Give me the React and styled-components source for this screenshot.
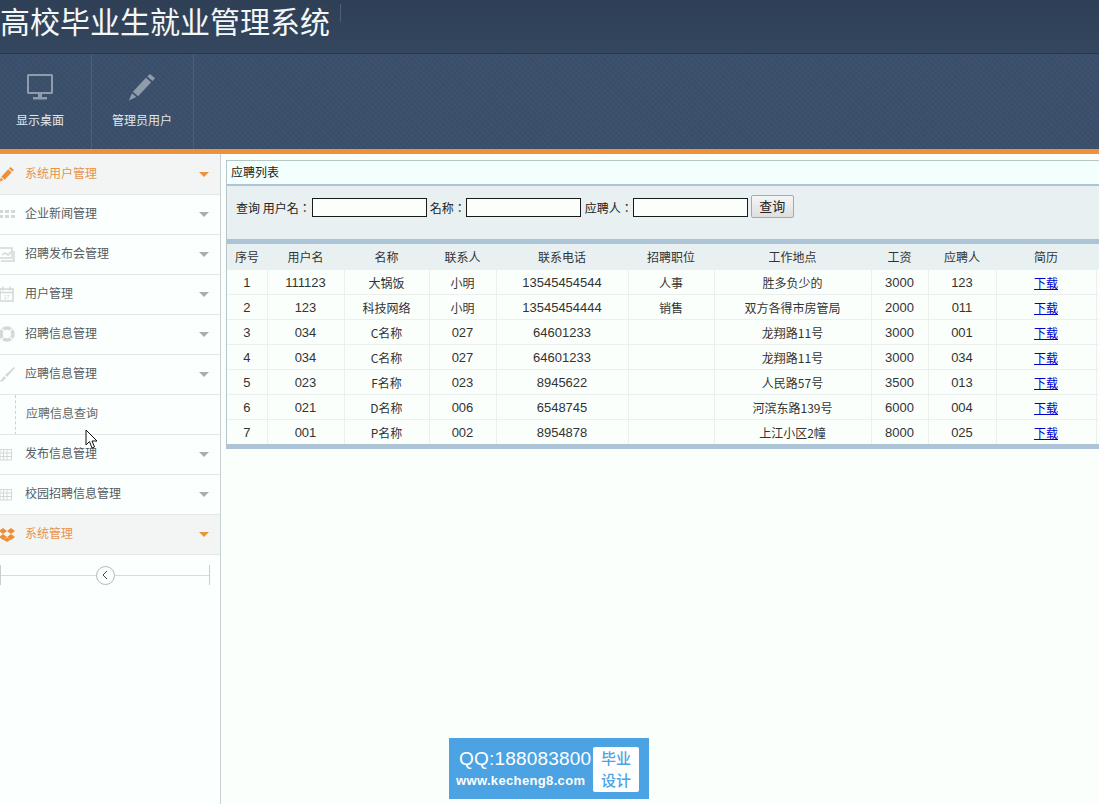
import React from 'react';
import styled, { createGlobalStyle } from 'styled-components';

const GlobalStyle = createGlobalStyle`
  html, body {
    margin: 0;
    height: 100%;
    overflow: hidden;
    background: #fbfffc;
  }
  body {
    font-family: "Noto Sans CJK SC", "Liberation Sans", sans-serif;
    font-size: 12px;
    color: #333;
  }
`;

const Page = styled.div`
  position: relative;
  width: 1099px;
  height: 804px;
  overflow: hidden;
`;

const TitleBar = styled.header`
  display: flex;
  height: 53px;
  background: linear-gradient(#2e3f56, #34475f);
  border-bottom: 1px solid #27384c;
`;

const Title = styled.h1`
  margin: 0;
  height: 40px;
  padding-right: 10px;
  font-size: 30px;
  line-height: 40px;
  font-weight: 400;
  color: #f4f7f8;
  white-space: nowrap;
`;

const TitleRule = styled.span`
  width: 1px;
  height: 18px;
  margin-top: 4px;
  background: #4c5f76;
`;

const Toolbar = styled.nav`
  display: flex;
  height: 95px;
  background-color: #3a4f6b;
  background-image:
    repeating-linear-gradient(45deg, rgba(255, 255, 255, 0.02) 0 2px, transparent 2px 4px),
    repeating-linear-gradient(-45deg, rgba(0, 0, 0, 0.025) 0 2px, transparent 2px 4px);
`;

const ToolButton = styled.a`
  display: flex;
  flex-direction: column;
  align-items: center;
  box-sizing: border-box;
  width: ${props => props.$width}px;
  padding: 19px ${props => props.$inset}px 0 0;
  border-right: 1px solid #4d6078;
  color: #e4e8ec;
  font-size: 12px;
  line-height: 16px;

  svg {
    display: block;
    height: 28px;
    margin-bottom: 11px;
  }
`;

const OrangeBar = styled.div`
  height: 5px;
  background: #f0913a;
`;

const Body = styled.div`
  display: flex;
  height: 650px;
`;

const Sidebar = styled.aside`
  flex: none;
  box-sizing: border-box;
  width: 221px;
  padding-top: 1px;
  border-right: 1px solid #c8d2d6;
  background: #fbfffd;
`;

const MenuItem = styled.div`
  display: flex;
  align-items: center;
  box-sizing: border-box;
  height: 40px;
  padding: 0 11px 4px 0;
  border-bottom: 1px solid #e3e9e7;
  background: ${props => (props.$active ? '#f2f5f3' : 'transparent')};
  color: ${props => (props.$active ? '#e9924a' : '#555b60')};
`;

const MenuIcon = styled.span`
  display: flex;
  flex: none;
  width: 25px;
  height: 18px;
  margin-top: 3px;
  overflow: hidden;
  color: ${props => (props.$active ? '#ee8f36' : '#d4d8d8')};

  svg {
    display: block;
    flex: none;
    width: 16px;
    height: 18px;
    margin-left: -1px;
  }
`;

const MenuLabel = styled.span`
  flex: 1;
  font-size: 12px;
`;

const Caret = styled.i`
  width: 0;
  height: 0;
  margin-top: 4px;
  border-style: solid;
  border-width: 5px 5px 0;
  border-color: ${props => (props.$active ? '#ee9138' : '#a9adad')} transparent transparent;
`;

const SubItem = styled.div`
  display: flex;
  align-items: center;
  box-sizing: border-box;
  height: 40px;
  margin-left: 15px;
  padding: 0 0 6px 10px;
  border-left: 1px dashed #ccd2d2;
  color: #666;
  font-size: 12px;
  position: relative;

  &::after {
    content: '';
    position: absolute;
    left: -16px;
    right: 0;
    bottom: 0;
    border-bottom: 1px solid #e3e9e7;
  }
`;

const Collapse = styled.div`
  display: flex;
  align-items: center;
  justify-content: center;
  box-sizing: border-box;
  width: 210px;
  height: 20px;
  margin-top: 10px;
  border-left: 1px solid #c9cfcf;
  border-right: 1px solid #c9cfcf;
  background: linear-gradient(#d6dcdc, #d6dcdc) center / 100% 1px no-repeat;
`;

const CollapseButton = styled.span`
  display: flex;
  align-items: center;
  justify-content: center;
  box-sizing: border-box;
  width: 19px;
  height: 19px;
  border: 1px solid #b4baba;
  border-radius: 50%;
  background: #fbfffd;
`;

const Main = styled.main`
  flex: 1;
  min-width: 0;
  padding: 6px 0 0 5px;
`;

const Panel = styled.section`
  width: 900px;
  border-left: 1px solid #b4c6cc;
`;

const PanelTitle = styled.div`
  box-sizing: border-box;
  height: 26px;
  padding-left: 4px;
  border-top: 1px solid #b5c8c8;
  border-bottom: 2px solid #adc3d6;
  background: #f3fffc;
  color: #222;
  font-size: 12px;
  line-height: 22px;
`;

const SearchBar = styled.form`
  display: flex;
  align-items: flex-start;
  box-sizing: border-box;
  height: 53px;
  padding: 9px 0 0 9px;
  background: #e9f0f1;
  color: #222;
  font-family: "Noto Sans CJK TC", "Liberation Sans", sans-serif;
  font-size: 12px;
  line-height: 25px;
`;

const SearchLabel = styled.label`
  margin-right: ${props => props.$gap}px;
  white-space: nowrap;
`;

const SearchInput = styled.input`
  box-sizing: border-box;
  width: 115px;
  height: 19px;
  margin: 3px ${props => props.$gap}px 0 0;
  border: 1px solid #1a1a1a;
  background: #fbfffc;
`;

const SearchButton = styled.button`
  box-sizing: border-box;
  width: 43px;
  height: 23px;
  padding: 0 0 2px;
  border: 1px solid #a9a9a9;
  border-radius: 2px;
  background: linear-gradient(#f6f6f6, #dedede);
  color: #222;
  font: inherit;
  font-size: 13px;
  line-height: 16px;
`;

const Grid = styled.table`
  width: 899px;
  border-collapse: collapse;
  table-layout: fixed;
  border-top: 5px solid #adc3d6;
  border-bottom: 5px solid #adc3d6;
`;

const HeadCell = styled.th`
  height: 24px;
  padding: 0 0 2px;
  background: #e9f0f1;
  color: #333;
  font-size: 12px;
  font-weight: 400;
`;

const Cell = styled.td`
  height: 24px;
  padding: 0;
  border-right: 1px solid #ebf0ee;
  border-bottom: 1px solid #ebf0ee;
  text-align: center;
  color: #333;
  font-family: ${props => (props.$num ? '"Liberation Sans", sans-serif' : 'inherit')};
  font-size: ${props => (props.$num ? '13px' : '12px')};
`;

const DownloadLink = styled.a`
  color: #0000cc;
  text-decoration: underline;
  font-size: 12px;
`;

const Watermark = styled.div`
  position: absolute;
  left: 449px;
  top: 738px;
  display: flex;
  align-items: center;
  box-sizing: border-box;
  width: 200px;
  height: 61px;
  padding-left: 7px;
  background: #4ba3e3;
  color: #fff;
`;

const WatermarkText = styled.div`
  width: 137px;
  font-family: "Liberation Sans", sans-serif;
  white-space: nowrap;
`;

const WatermarkQQ = styled.div`
  font-size: 19px;
  line-height: 24px;
  margin-left: 3px;
  letter-spacing: 0.2px;
`;

const WatermarkSite = styled.div`
  font-size: 13px;
  font-weight: 700;
  line-height: 20px;
  letter-spacing: 0.35px;
`;

const WatermarkBadge = styled.div`
  box-sizing: border-box;
  width: 46px;
  height: 45px;
  margin-top: 1px;
  border-radius: 2px;
  background: #fff;
  color: #4ba3e3;
  font-size: 15px;
  font-weight: 500;
  line-height: 22px;
  text-align: center;
`;

const Pointer = styled.svg`
  position: absolute;
  left: 85px;
  top: 429px;
`;

const PencilIcon = () => (
  <svg viewBox="0 0 32 32" fill="currentColor">
    <path d="M23 2l7 6-3 3-7-6zM18.500 6.500l7 6-14 15-7-6zM3.500 23l5.500 5-7.500 3z" />
  </svg>
);

const DotsIcon = () => (
  <svg viewBox="0 0 16 18" fill="currentColor">
    <path d="M0 5h4v3H0zM6 5h4v3H6zM12 5h4v3h-4zM0 10h4v3H0zM6 10h4v3H6zM12 10h4v3h-4z" />
  </svg>
);

const ChartIcon = () => (
  <svg viewBox="0 0 16 18" fill="none" stroke="currentColor" strokeWidth="1.500">
    <path d="M0 3h13v10H0zM2 16h13V6M3 10l3-2 3 2 3-3" />
  </svg>
);

const CalendarIcon = () => (
  <svg viewBox="0 0 16 18" fill="none" stroke="currentColor" strokeWidth="1.500">
    <path d="M1 4h13v12H1zM1 7.500h13M4 1.500v4M11 1.500v4" />
    <text x="7.500" y="14" fontSize="5.500" textAnchor="middle" fill="currentColor" stroke="none" fontFamily="Liberation Sans, sans-serif">17</text>
  </svg>
);

const RingIcon = () => (
  <svg viewBox="0 0 16 18" fill="none" stroke="currentColor">
    <circle cx="8" cy="9" r="6" strokeWidth="3.500" />
    <path d="M2.500 3.500l3 3M13.500 3.500l-3 3M2.500 14.500l3-3M13.500 14.500l-3-3" stroke="#fbfffd" strokeWidth="1.200" />
  </svg>
);

const BrushIcon = () => (
  <svg viewBox="0 0 16 18" fill="currentColor">
    <path d="M15 2l1 1-8 9-2-2zM5 11l2 2-3 3-4 1 2-2z" />
  </svg>
);

const TableIcon = () => (
  <svg viewBox="0 0 16 18" fill="none" stroke="currentColor">
    <path d="M0 4.500h13M0 8h13M0 11.500h13M0 15h13M1 4v11M4.500 4v11M8 4v11M12.500 4v11" />
  </svg>
);

const BoxIcon = () => (
  <svg viewBox="0 0 16 18" fill="currentColor">
    <path d="M4 3l4 3-4 3-4-3zM12 3l4 3-4 3-4-3zM4 9l4 3-4 3-4-3zM12 9l4 3-4 3-4-3z" />
    <path d="M4 14.500l4-2 4 2-4 2.500z" />
  </svg>
);

const menu = [
  { label: '系统用户管理', icon: <PencilIcon />, active: true },
  { label: '企业新闻管理', icon: <DotsIcon /> },
  { label: '招聘发布会管理', icon: <ChartIcon /> },
  { label: '用户管理', icon: <CalendarIcon /> },
  { label: '招聘信息管理', icon: <RingIcon /> },
  { label: '应聘信息管理', icon: <BrushIcon />, sub: '应聘信息查询' },
  { label: '发布信息管理', icon: <TableIcon /> },
  { label: '校园招聘信息管理', icon: <TableIcon /> },
  { label: '系统管理', icon: <BoxIcon />, active: true },
];

const columns = [
  ['序号', 40], ['用户名', 77], ['名称', 85], ['联系人', 67], ['联系电话', 132],
  ['招聘职位', 86], ['工作地点', 157], ['工资', 57], ['应聘人', 68], ['简历', 100], ['', 30],
];

const rows = [
  ['1', '111123', '大锅饭', '小明', '13545454544', '人事', '胜多负少的', '3000', '123'],
  ['2', '123', '科技网络', '小明', '13545454444', '销售', '双方各得市房管局', '2000', '011'],
  ['3', '034', 'C名称', '027', '64601233', '', '龙翔路11号', '3000', '001'],
  ['4', '034', 'C名称', '027', '64601233', '', '龙翔路11号', '3000', '034'],
  ['5', '023', 'F名称', '023', '8945622', '', '人民路57号', '3500', '013'],
  ['6', '021', 'D名称', '006', '6548745', '', '河滨东路139号', '6000', '004'],
  ['7', '001', 'P名称', '002', '8954878', '', '上江小区2幢', '8000', '025'],
];

const isNum = value => /^\d+$/.test(value);

export default function App() {
  return (
    <Page>
      <GlobalStyle />
      <TitleBar>
        <Title>高校毕业生就业管理系统</Title>
        <TitleRule />
      </TitleBar>
      <Toolbar>
        <ToolButton $width={92} $inset={11}>
          <svg width="28" height="28" viewBox="0 0 28 28" fill="#8f9cab">
            <path d="M2.500 1h23A1.500 1.500 0 0 1 27 2.500v17a1.500 1.500 0 0 1-1.500 1.500h-23A1.500 1.500 0 0 1 1 19.500v-17A1.500 1.500 0 0 1 2.500 1zM3 3v16h22V3zM12 21h4v3h-4zM7 24h14v2.500H7z" fillRule="evenodd" />
          </svg>
          显示桌面
        </ToolButton>
        <ToolButton $width={102} $inset={1}>
          <svg width="28" height="28" viewBox="0 0 32 32" fill="#8f9cab">
            <path d="M25 1l6 5-3 3-6-5zM20.500 5.500l6 5-15 16-6-5zM4.500 23l5 4.500-8.500 4z" />
          </svg>
          管理员用户
        </ToolButton>
      </Toolbar>
      <OrangeBar />
      <Body>
        <Sidebar>
          {menu.map(item => (
            <React.Fragment key={item.label}>
              <MenuItem $active={item.active}>
                <MenuIcon $active={item.active}>{item.icon}</MenuIcon>
                <MenuLabel>{item.label}</MenuLabel>
                <Caret $active={item.active} />
              </MenuItem>
              {item.sub && <SubItem>{item.sub}</SubItem>}
            </React.Fragment>
          ))}
          <Collapse>
            <CollapseButton>
              <svg width="8" height="10" viewBox="0 0 8 10" fill="none" stroke="#444" strokeWidth="1">
                <path d="M6 1L2 5l4 4" />
              </svg>
            </CollapseButton>
          </Collapse>
        </Sidebar>
        <Main>
          <Panel>
            <PanelTitle>应聘列表</PanelTitle>
            <SearchBar>
              <SearchLabel $gap={1}>查询 用户名：</SearchLabel>
              <SearchInput $gap={3} />
              <SearchLabel $gap={0}>名称：</SearchLabel>
              <SearchInput $gap={4} />
              <SearchLabel $gap={0}>应聘人：</SearchLabel>
              <SearchInput $gap={3} />
              <SearchButton type="button">查询</SearchButton>
            </SearchBar>
            <Grid>
              <colgroup>
                {columns.map(([name, width]) => <col key={name} width={width} />)}
              </colgroup>
              <thead>
                <tr>
                  {columns.map(([name]) => <HeadCell key={name}>{name}</HeadCell>)}
                </tr>
              </thead>
              <tbody>
                {rows.map(row => (
                  <tr key={row[0]}>
                    {row.map((value, i) => <Cell key={i} $num={isNum(value)}>{value}</Cell>)}
                    <Cell><DownloadLink href="#">下载</DownloadLink></Cell>
                    <Cell />
                  </tr>
                ))}
              </tbody>
            </Grid>
          </Panel>
        </Main>
      </Body>
      <Watermark>
        <WatermarkText>
          <WatermarkQQ>QQ:188083800</WatermarkQQ>
          <WatermarkSite>www.kecheng8.com</WatermarkSite>
        </WatermarkText>
        <WatermarkBadge>毕业<br />设计</WatermarkBadge>
      </Watermark>
      <Pointer width="14" height="22" viewBox="0 0 14 22">
        <path d="M1 1v15l3.500-3.500L7 19l2.500-1-2.500-6h5z" fill="#fff" stroke="#111" strokeWidth="1" />
      </Pointer>
    </Page>
  );
}
